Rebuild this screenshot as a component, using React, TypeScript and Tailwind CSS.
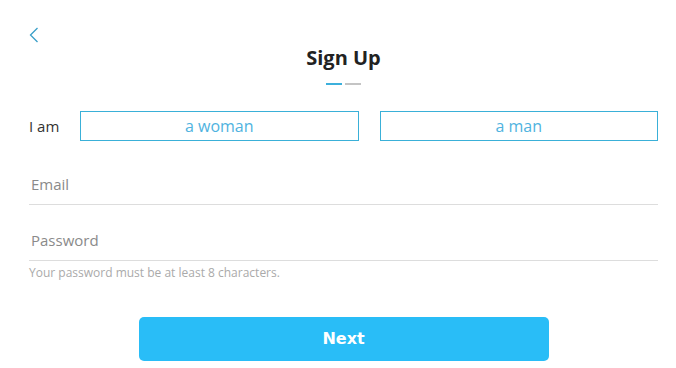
import { useState } from "react";

const muli = { fontFamily: "'Open Sans', 'Noto Sans', sans-serif" };

export default function App() {
  const [gender, setGender] = useState<"woman" | "man" | null>(null);
  const [email, setEmail] = useState("");
  const [password, setPassword] = useState("");

  return (
    <main className="min-h-screen bg-white pl-[29px] pr-[18px] pt-[27px]" style={muli}>
      <button className="block h-[16px] w-[10px] text-[#3a9fc8]" aria-label="Back">
        <svg viewBox="0 0 10 16" className="h-[16px] w-[10px]" fill="none" stroke="currentColor" strokeWidth="1.3">
          <path d="M8.5 1 L1.5 8 L8.5 15" />
        </svg>
      </button>

      <h1 className="mt-[3px] text-center text-[20px] font-bold leading-[24px] text-[#222]">Sign Up</h1>

      <div className="mt-[13px] flex justify-center gap-[3px]">
        <span className="h-[2px] w-[16px] bg-[#3cb0dc]" />
        <span className="h-[2px] w-[16px] bg-[#c4c4c4]" />
      </div>

      <div className="mt-[26px] flex items-center">
        <span className="w-[51px] text-[15px] text-[#333]">I am</span>
        <div className="flex flex-1 gap-[21px]">
          {(["woman", "man"] as const).map((g) => (
            <button
              key={g}
              onClick={() => setGender(g)}
              className={`h-[30px] flex-1 border text-[16px] ${
                gender === g ? "border-[#3ab0d8] bg-[#3ab0d8] text-white" : "border-[#3ab0d8] text-[#4fb3e0]"
              }`}
            >
              a {g}
            </button>
          ))}
        </div>
      </div>

      <input
        value={email}
        onChange={(e) => setEmail(e.target.value)}
        placeholder="Email"
        className="mt-[23px] block h-[41px] w-full border-b border-[#dddddd] px-[2px] text-[15px] text-[#333] outline-none placeholder:text-[#8a8a8a]"
      />
      <input
        type="password"
        value={password}
        onChange={(e) => setPassword(e.target.value)}
        placeholder="Password"
        className="mt-[15px] block h-[41px] w-full border-b border-[#dddddd] px-[2px] text-[15px] text-[#333] outline-none placeholder:text-[#8a8a8a]"
      />
      <p className="mt-[5px] text-[12px] leading-[14px] text-[#aaaaaa]">Your password must be at least 8 characters.</p>

      <button
        className="mx-auto mt-[37px] block h-[44px] w-[410px] rounded-[5px] bg-[#29bdf7] text-[16px] font-bold text-white"
        style={{ fontFamily: "'DejaVu Sans', Verdana, sans-serif" }}
      >
        Next
      </button>
    </main>
  );
}
